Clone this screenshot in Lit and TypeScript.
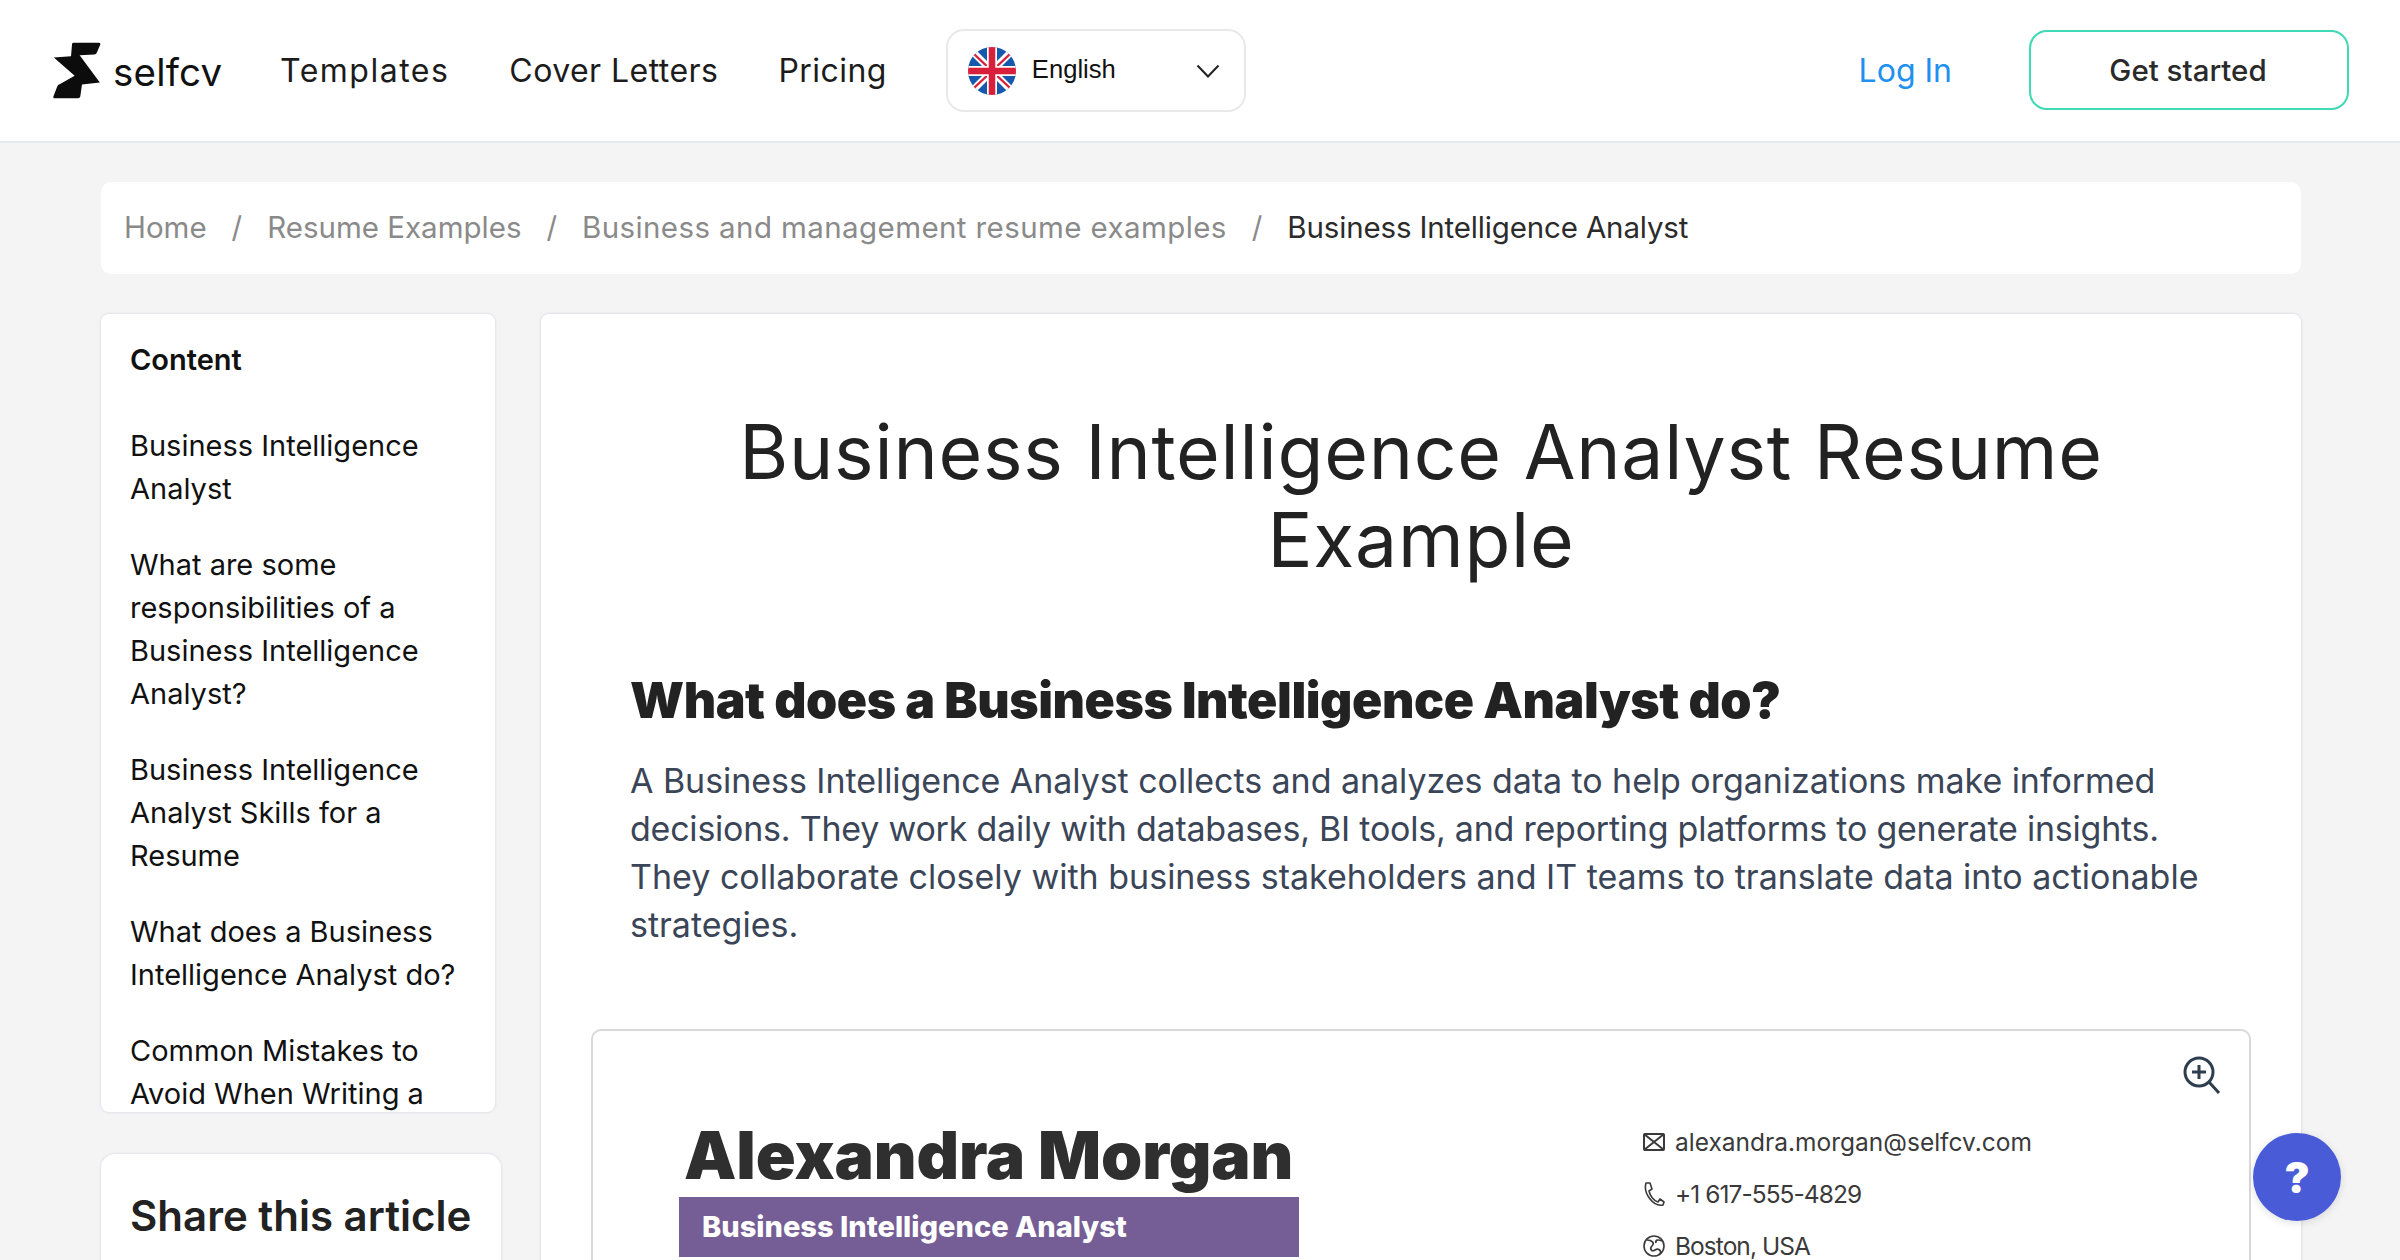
import { LitElement, html, css } from "lit";
import { customElement } from "lit/decorators.js";

@customElement("app-root")
export class AppRoot extends LitElement {
  static styles = css`
    :host { display: block; width: 2400px; height: 1260px; overflow: hidden; background: #f4f4f5; font-family: Inter, "Liberation Sans", sans-serif; color: #222; position: relative; }
    a { color: inherit; text-decoration: none; }
    .top { height: 143px; box-sizing: border-box; background: #fff; border-bottom: 2px solid #e6e9ee; display: flex; align-items: center; padding: 0 51px 0 53px; }
    .logo { display: flex; align-items: center; gap: 12px; width: 227px; }
    .logo span { font-size: 38.5px; color: #111; letter-spacing: 0.2px; line-height: 1; margin-top: 3px; }
    .nav { display: flex; gap: 60px; font-size: 32px; color: #1c1c1c; letter-spacing: 0.45px; }
    .nav .wide { letter-spacing: 1.5px; }
    .lang { margin-left: 59px; width: 300px; height: 83px; box-sizing: border-box; border: 2px solid #e9e9e9; border-radius: 18px; display: flex; align-items: center; padding: 0 24px 0 20px; }
    .lang .name { font-family: "Liberation Sans", sans-serif; font-size: 25.6px; color: #111; margin-left: 16px; flex: 1; margin-top: -2px; }
    .login { margin-left: auto; font-size: 32px; color: #1e90f0; }
    .cta { margin-left: 77px; width: 320px; height: 80px; box-sizing: border-box; border: 2px solid #3fd9b6; border-radius: 18px; display: flex; align-items: center; justify-content: center; font-size: 29.5px; font-weight: 500; color: #2a2a2a; margin-top: -1px; padding-right: 2px; }
    .wrap { padding: 39px 99px 0 101px; }
    .crumbs { height: 92px; background: #fff; border-radius: 10px; display: flex; align-items: center; padding: 0 0 2px 23px; box-sizing: border-box; font-size: 29.5px; color: #8a8a8a; white-space: nowrap; margin-bottom: 40px; }
    .crumbs i { font-style: normal; width: 60.5px; text-align: center; flex: none; }
    .crumbs .long { letter-spacing: 0.4px; }
    .crumbs b { font-weight: 400; color: #2b2b2b; letter-spacing: -0.15px; }
    .cols { display: flex; gap: 46px; align-items: flex-start; }
    .side { width: 394px; flex: none; }
    .toc { height: 798px; box-sizing: border-box; overflow: hidden; background: #fff; border-radius: 8px; box-shadow: 0 0 3px rgba(30,40,80,.16); padding: 27px 20px 0 29px; font-size: 29px; line-height: 43px; color: #111; white-space: nowrap; }
    .toc h4 { margin: 0 0 45px; font-size: 29px; line-height: 38px; font-weight: 600; }
    .toc p { margin: 0 0 33px; }
    .toc p:last-child { margin: 0; }
    .share { margin-top: 42px; width: 400px; height: 200px; box-sizing: border-box; background: #fff; border-radius: 14px; box-shadow: 0 0 3px rgba(30,40,80,.16); padding: 37px 0 0 29px; font-size: 42px; line-height: 50px; font-weight: 600; color: #222; white-space: nowrap; }
    .main { flex: 1; background: #fff; border-radius: 8px; box-shadow: 0 0 3px rgba(30,40,80,.18); padding: 94px 50px 0; height: 1200px; box-sizing: border-box; }
    h1 { margin: 0 0 84px; text-align: center; font-size: 75px; line-height: 88px; letter-spacing: 0.77px; font-weight: 400; color: #222; }
    .body { padding: 0 39px; }
    h2 { margin: 0 0 25px; font-size: 50px; line-height: 64px; font-weight: 900; letter-spacing: -0.43px; color: #222; white-space: nowrap; }
    .para { margin: 0 0 80px; font-size: 34px; line-height: 48px; color: #3a4558; white-space: nowrap; }
    .para .first { letter-spacing: -0.05px; }
    .para .tight { letter-spacing: -0.23px; }
    .cv { position: relative; height: 400px; border: 2px solid #d9d9dc; border-radius: 10px; box-sizing: border-box; display: flex; padding: 86px 0 0 86px; }
    .zoom { position: absolute; right: 28px; top: 25px; }
    .left { width: 620px; margin-right: 344px; }
    .left h3 { margin: 0 0 4px 5px; font-size: 66px; line-height: 76px; font-weight: 900; letter-spacing: -0.1px; color: #2f2f2f; white-space: nowrap; }
    .bar { height: 60px; background: #755e95; color: #fff; font-size: 29px; font-weight: 800; display: flex; align-items: center; padding: 0 0 2px 23px; box-sizing: border-box; white-space: nowrap; }
    .contact { display: flex; flex-direction: column; gap: 16px; padding-top: 7px; }
    .row { display: flex; align-items: center; gap: 10px; height: 36px; font-size: 24.5px; color: #3a3a3a; white-space: nowrap; }
    .row.narrow { letter-spacing: -0.95px; }
    .help { position: absolute; left: 2253px; top: 1133px; width: 88px; height: 88px; border-radius: 50%; background: #4a5bd8; color: #fff; display: flex; align-items: center; justify-content: center; font-size: 42px; font-weight: 900; box-shadow: 0 2px 8px rgba(0,0,0,.12); }
  `;

  private flag() {
    return html`<svg width="48" height="48" viewBox="0 0 48 48">
      <defs><clipPath id="c"><circle cx="24" cy="24" r="24"/></clipPath></defs>
      <g clip-path="url(#c)">
        <rect width="48" height="48" fill="#1558ad"/>
        <path d="M4 4 44 44M44 4 4 44" stroke="#fff" stroke-width="7"/>
        <path d="M6 7 42 41M42 7 6 41" stroke="#d8203a" stroke-width="2.4"/>
        <path d="M24 0V48M0 24H48" stroke="#fff" stroke-width="10"/>
        <path d="M24 0V48M0 24H48" stroke="#d8203a" stroke-width="6.5"/>
      </g>
    </svg>`;
  }

  render() {
    return html`
      <div class="top">
        <a class="logo" href="#">
          <svg width="48" height="57" viewBox="40 33 144 172"><path fill="#0c0c0c" d="M101 35H178Q184 35 182 41L172 65Q170 71 164 71L120 73 181 155 127 161 122 197Q121 203 115 203H46Q39 203 41 197L53 166Q55 161 61 160L105 135 42 80 94 76 97 39Q98 35 101 35Z"/></svg>
          <span>selfcv</span>
        </a>
        <nav class="nav"><a class="wide" href="#">Templates</a><a href="#">Cover Letters</a><a href="#">Pricing</a></nav>
        <div class="lang">
          ${this.flag()}
          <span class="name">English</span>
          <svg width="24" height="14" viewBox="0 0 24 14"><path d="M1.5 1.5 12 12.5 22.5 1.5" fill="none" stroke="#222" stroke-width="2"/></svg>
        </div>
        <a class="login" href="#">Log In</a>
        <a class="cta" href="#">Get started</a>
      </div>
      <div class="wrap">
        <div class="crumbs">
          <a href="#">Home</a><i>/</i><a href="#">Resume Examples</a><i>/</i><a class="long" href="#">Business and management resume examples</a><i>/</i><b>Business Intelligence Analyst</b>
        </div>
        <div class="cols">
          <aside class="side">
            <div class="toc">
              <h4>Content</h4>
              <p>Business Intelligence<br>Analyst</p>
              <p>What are some<br>responsibilities of a<br>Business Intelligence<br>Analyst?</p>
              <p>Business Intelligence<br>Analyst Skills for a<br>Resume</p>
              <p>What does a Business<br>Intelligence Analyst do?</p>
              <p>Common Mistakes to<br>Avoid When Writing a</p>
            </div>
            <div class="share">Share this article</div>
          </aside>
          <main class="main">
            <h1>Business Intelligence Analyst Resume<br>Example</h1>
            <div class="body">
              <h2>What does a Business Intelligence Analyst do?</h2>
              <p class="para"><span class="first">A Business Intelligence Analyst collects and analyzes data to help organizations make informed</span><br><span class="tight">decisions. They work daily with databases, BI tools, and reporting platforms to generate insights.</span><br>They collaborate closely with business stakeholders and IT teams to translate data into actionable<br>strategies.</p>
            </div>
            <section class="cv">
              <svg class="zoom" width="38" height="38" viewBox="0 0 38 38" fill="none" stroke="#2f3e4e" stroke-width="3"><circle cx="16" cy="16" r="14"/><path d="M16 9V23M9 16H23M26 26 36 37"/></svg>
              <div class="left">
                <h3>Alexandra Morgan</h3>
                <div class="bar">Business Intelligence Analyst</div>
              </div>
              <div class="contact">
                <div class="row"><svg width="22" height="24" viewBox="0 0 22 24" fill="none" stroke="#3a3a3a" stroke-width="2"><rect x="1" y="4" width="20" height="16" rx="1"/><path d="M1 4 21 20M21 4 1 20"/></svg>alexandra.morgan@selfcv.com</div>
                <div class="row narrow"><svg width="22" height="26" viewBox="0 0 22 26" fill="none" stroke="#3a3a3a" stroke-width="1.6" stroke-linejoin="round"><path d="M3 2 7 2 9 8 6 10C7 15 11 20 15 21L17 18 21 21 20 24C10 26 0 12 3 2Z"/></svg>+1 617-555-4829</div>
                <div class="row narrow"><svg width="22" height="24" viewBox="0 0 22 24" fill="none" stroke="#3a3a3a" stroke-width="1.6"><circle cx="11" cy="12" r="10"/><path d="M4 6C9 6 12 9 9 12 6 15 9 18 12 16 15 14 19 16 17 20M19 7C15 5 12 6 13 9"/></svg>Boston, USA</div>
              </div>
            </section>
          </main>
        </div>
      </div>
      <div class="help">?</div>
    `;
  }
}
